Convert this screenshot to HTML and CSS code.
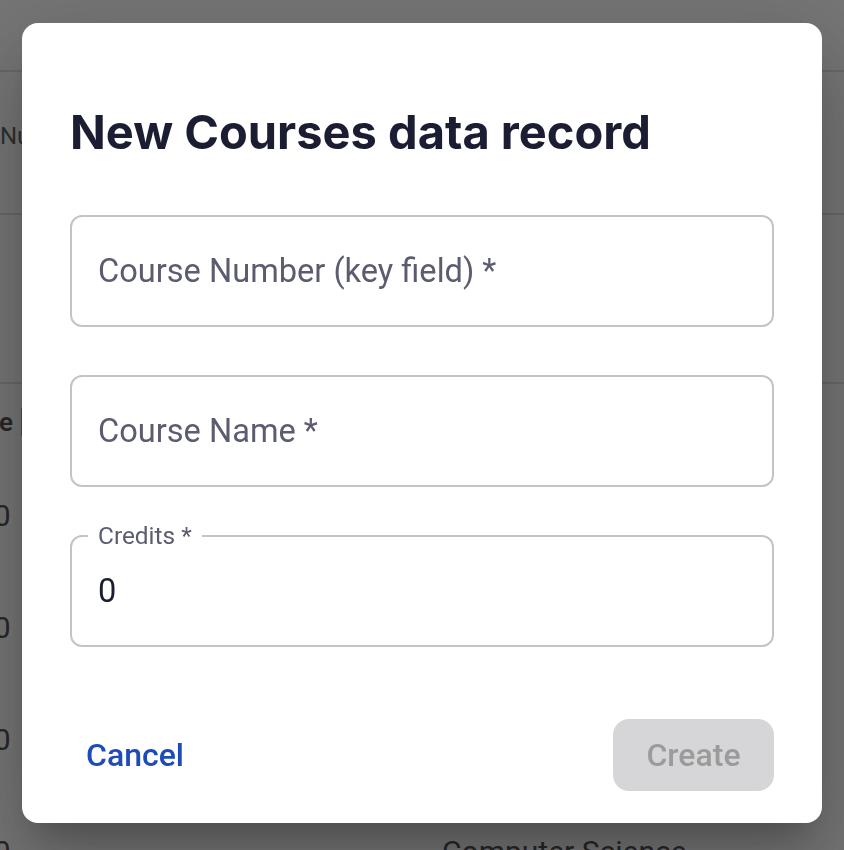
FILE: index.html
```html
<!DOCTYPE html>
<html lang="en">
<head>
<meta charset="utf-8">
<title>New Courses data record</title>
<link rel="stylesheet" href="styles.css">
</head>
<body>
<div class="app">
  <header class="app-header"></header>
  <section class="toolbar">
    <span class="toolbar-text">Number</span>
  </section>
  <section class="filters"></section>
  <div class="table">
    <div class="thead"><span class="th">Name</span><span class="sep"></span></div>
    <div class="tr"><span class="td">10</span></div>
    <div class="tr"><span class="td">10</span></div>
    <div class="tr"><span class="td">10</span></div>
    <div class="tr"><span class="td">10</span><span class="td-dept">Computer Science</span></div>
  </div>
</div>

<div class="backdrop">
  <div class="dialog" role="dialog" aria-labelledby="dlg-title">
    <h2 class="dialog-title" id="dlg-title">New Courses data record</h2>
    <div class="fields">
      <div class="field"><span class="placeholder">Course Number (key field) *</span></div>
      <div class="field"><span class="placeholder">Course Name *</span></div>
      <div class="field field-filled">
        <span class="float-label">Credits *</span>
        <span class="value">0</span>
      </div>
    </div>
    <div class="actions">
      <button class="btn-text" type="button">Cancel</button>
      <button class="btn-create" type="button" disabled>Create</button>
    </div>
  </div>
</div>
</body>
</html>
```

FILE: styles.css
```css
* { box-sizing: border-box; }

html, body {
  margin: 0;
  padding: 0;
  height: 100%;
}

body {
  background: #ffffff;
  font-family: Roboto, "Liberation Sans", sans-serif;
  overflow: hidden;
  position: relative;
}

/* underlying page */
.app {
  color: #555;
  height: 100%;
  overflow: hidden;
}

.app-header {
  height: 72px;
  border-bottom: 2px solid #e2e2e2;
}

.toolbar {
  height: 143px;
  border-bottom: 2px solid #e2e2e2;
  display: flex;
  align-items: center;
  padding-bottom: 14px;
}

.toolbar-text {
  font-size: 24px;
  color: #666;
}

.filters {
  height: 169px;
  border-bottom: 2px solid #e2e2e2;
}

.table {
  display: flex;
  flex-direction: column;
}

.thead {
  height: 75px;
  display: flex;
  align-items: center;
  font-size: 26px;
  font-weight: 600;
  color: #555;
  gap: 8px;
}

.th {
  margin-left: -56px;
}

.sep {
  width: 2px;
  height: 28px;
  background: #aaa;
}

.tr {
  height: 112px;
  display: flex;
  align-items: center;
  font-size: 30px;
}

.td {
  width: 465px;
  margin-left: -23px;
  flex-shrink: 0;
}

.td-dept {
  color: #555;
}

/* overlay */
.backdrop {
  position: fixed;
  inset: 0;
  background: rgba(0, 0, 0, 0.54);
  display: flex;
  justify-content: center;
  align-items: flex-start;
  padding-top: 23px;
}

.dialog {
  width: 800px;
  height: 800px;
  background: #fff;
  border-radius: 16px;
  padding: 82px 48px 32px;
  display: flex;
  flex-direction: column;
  box-shadow:
    0 22px 30px -14px rgba(0, 0, 0, 0.2),
    0 48px 76px 6px rgba(0, 0, 0, 0.14),
    0 18px 92px 16px rgba(0, 0, 0, 0.12);
}

.dialog-title {
  margin: 0;
  font-family: Inter, "Liberation Sans", sans-serif;
  font-weight: 700;
  font-size: 47px;
  line-height: 54px;
  letter-spacing: 0;
  color: #1b1d33;
}

.fields {
  margin-top: 56px;
  display: flex;
  flex-direction: column;
  gap: 48px;
}

.field {
  position: relative;
  height: 112px;
  border: 2px solid #c4c4c4;
  border-radius: 12px;
  display: flex;
  align-items: center;
  padding: 0 26px;
}

.placeholder {
  font-size: 32.6px;
  color: #5b5c70;
}

.float-label {
  position: absolute;
  top: -15px;
  left: 16px;
  padding: 0 10px;
  background: #fff;
  font-size: 24.4px;
  line-height: 28px;
  color: #5b5c70;
}

.value {
  font-size: 32.6px;
  color: #1b1d33;
}

.actions {
  margin-top: auto;
  display: flex;
  justify-content: space-between;
  align-items: center;
}

.btn-text {
  border: 0;
  background: none;
  padding: 0 16px;
  height: 72px;
  font-family: Roboto, "Liberation Sans", sans-serif;
  font-weight: 500;
  font-size: 32px;
  color: #1d4bb8;
  cursor: pointer;
}

.btn-create {
  border: 0;
  width: 161px;
  height: 72px;
  border-radius: 16px;
  background: #d6d6d8;
  font-family: Roboto, "Liberation Sans", sans-serif;
  font-weight: 500;
  font-size: 32px;
  color: #9b9b9b;
}
```
